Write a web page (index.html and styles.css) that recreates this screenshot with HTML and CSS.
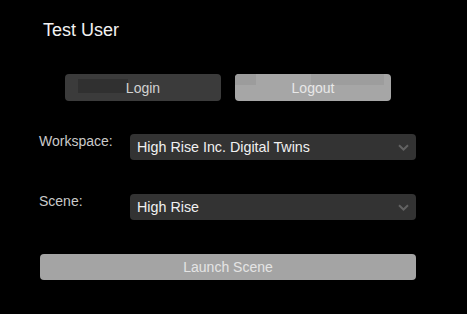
FILE: index.html
```html
<!DOCTYPE html>
<html>
<head>
<meta charset="utf-8">
<link rel="stylesheet" href="styles.css">
</head>
<body>
<div class="panel">
  <div class="user">Test User</div>
  <div class="auth">
    <button class="btn login"><span class="shade"></span><span class="lbl">Login</span></button>
    <button class="btn logout"><span class="shade-a"></span><span class="shade-b"></span><span class="lbl">Logout</span></button>
  </div>
  <div class="field">
    <div class="label">Workspace:</div>
    <div class="select"><span class="val">High Rise Inc. Digital Twins</span>
      <svg class="chev" width="11" height="7" viewBox="0 0 11 7"><path d="M1 1.2 L5.5 5.5 L10 1.2" fill="none" stroke="#626262" stroke-width="2"/></svg>
    </div>
  </div>
  <div class="field">
    <div class="label">Scene:</div>
    <div class="select"><span class="val">High Rise</span>
      <svg class="chev" width="11" height="7" viewBox="0 0 11 7"><path d="M1 1.2 L5.5 5.5 L10 1.2" fill="none" stroke="#626262" stroke-width="2"/></svg>
    </div>
  </div>
  <button class="btn launch"><span class="lbl">Launch Scene</span></button>
</div>
</body>
</html>
```
FILE: styles.css
```css
html, body {
  margin: 0;
  padding: 0;
  background: #000;
  width: 467px;
  height: 314px;
  overflow: hidden;
  font-family: "Liberation Sans", Arial, sans-serif;
}
.panel {
  display: flex;
  flex-direction: column;
  padding: 20px 0 0 0;
}
.user {
  margin-left: 43px;
  font-size: 18px;
  line-height: 20px;
  color: #f2f2f2;
}
.auth {
  display: flex;
  gap: 14px;
  margin: 34px 0 0 65px;
}
.btn {
  position: relative;
  border: none;
  border-radius: 4px;
  height: 27px;
  padding: 0;
  font-family: "Liberation Sans", Arial, sans-serif;
  font-size: 14px;
  overflow: hidden;
}
.btn .lbl {
  position: relative;
}
.login {
  width: 156px;
  background: #3b3b3b;
  color: #d2d2d2;
}
.login .shade {
  position: absolute;
  left: 13px;
  top: 5px;
  width: 50px;
  height: 14px;
  background: #303030;
}
.logout {
  width: 156px;
  background: #a6a6a6;
  color: #e8e8e8;
}
.logout .shade-a {
  position: absolute;
  left: 0;
  top: 0;
  width: 21px;
  height: 11px;
  background: #9c9c9c;
}
.logout .shade-b {
  position: absolute;
  left: 76px;
  top: 0;
  width: 73px;
  height: 11px;
  background: #9d9d9d;
}
.field {
  display: flex;
  align-items: flex-start;
  margin-top: 33px;
}
.field + .field {
  margin-top: 34px;
}
.label {
  width: 91px;
  margin-left: 39px;
  margin-top: -1px;
  font-size: 14px;
  line-height: 16px;
  color: #cacaca;
}
.select {
  width: 286px;
  height: 26px;
  background: #333;
  border-radius: 4px;
  display: flex;
  align-items: center;
  justify-content: space-between;
  box-sizing: border-box;
  padding: 0 7px 0 7px;
}
.val {
  font-size: 14.3px;
  color: #f0f0f0;
}
.chev {
  display: block;
}
.launch {
  margin: 34px 0 0 40px;
  width: 376px;
  height: 26px;
  background: #a4a4a4;
  color: #e4e4e4;
}
```
